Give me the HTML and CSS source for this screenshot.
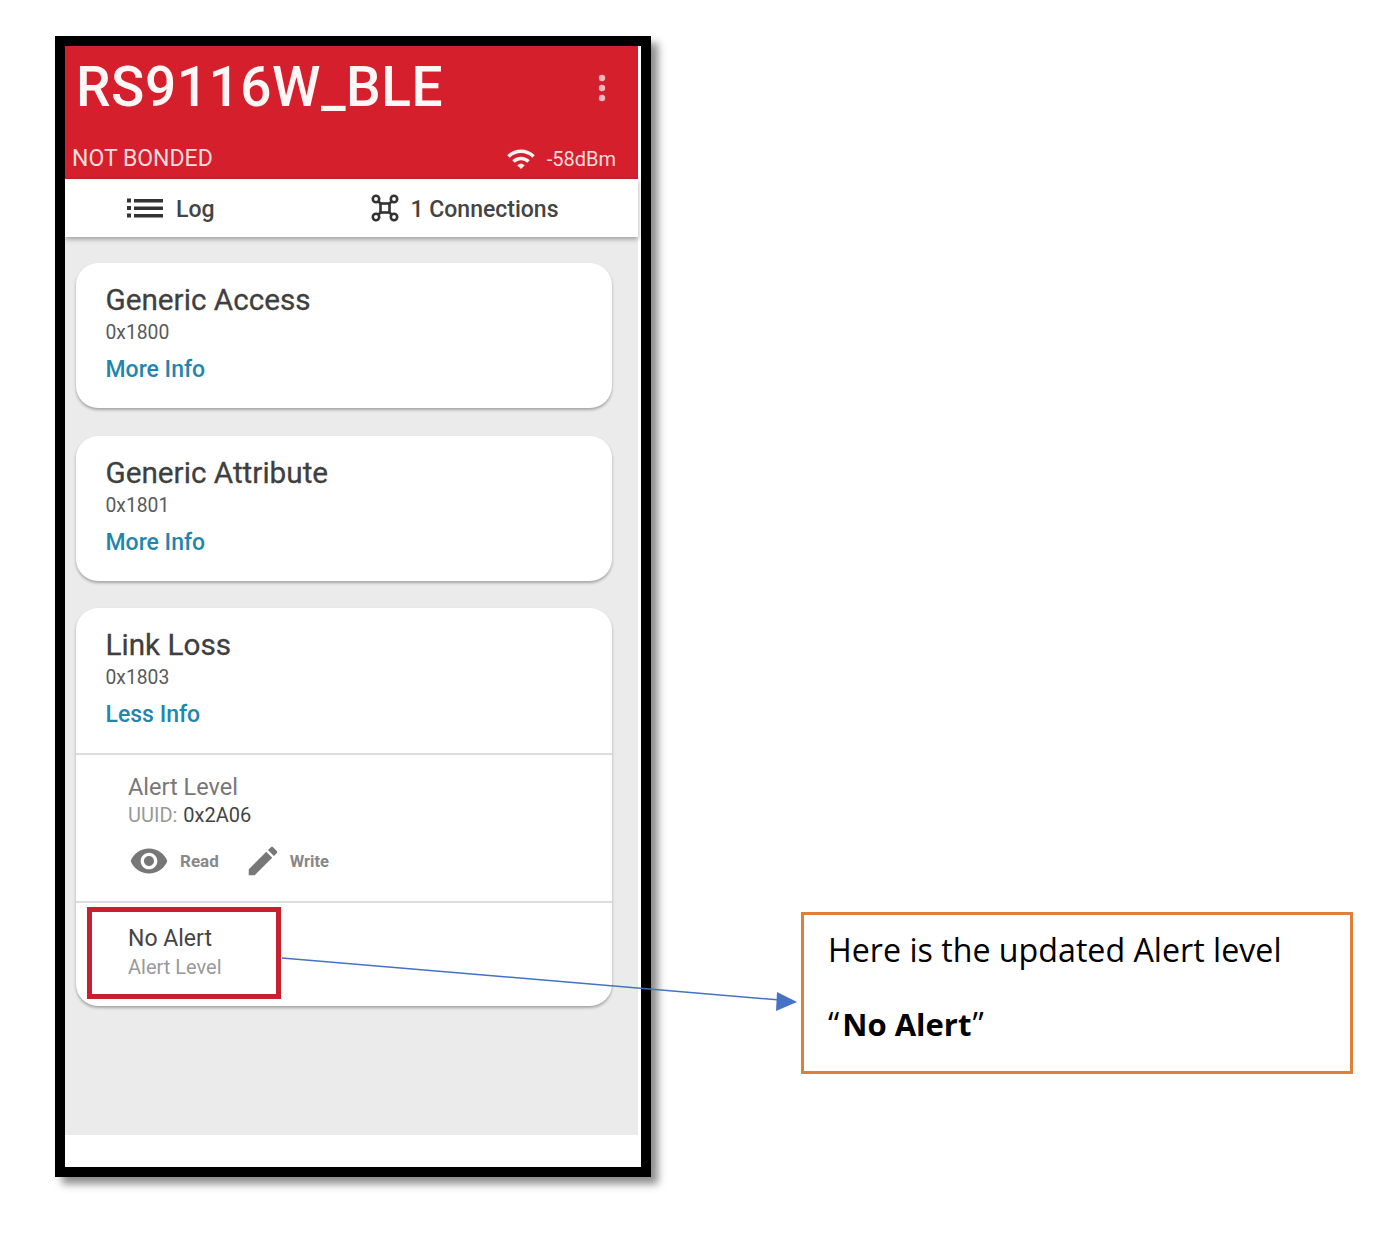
FILE: index.html
```html
<!DOCTYPE html>
<html lang="en">

<head>
    <meta charset="UTF-8">
    <meta name="viewport" content="width=device-width, initial-scale=1.0">
    <title>RS9116W_BLE Alert Level</title>
    <link rel="stylesheet" href="styles.css">
</head>

<body>
    <div class="page">
        <!-- phone screenshot -->
        <div class="phone">
            <header class="appbar">
                <div class="appbar-top">
                    <h1>RS9116W_BLE</h1>
                    <svg class="dots" width="8" height="28" viewBox="0 0 8 28">
                        <circle cx="4" cy="4" r="3.200"></circle>
                        <circle cx="4" cy="14" r="3.200"></circle>
                        <circle cx="4" cy="24" r="3.200"></circle>
                    </svg>
                </div>
                <div class="appbar-bottom">
                    <span>NOT BONDED</span>
                    <span class="rssi">
                        <svg width="30" height="30" viewBox="0 0 24 24">
                            <path d="M1 9l2 2c4.970-4.970 13.030-4.970 18 0l2-2C16.930 2.930 7.080 2.930 1 9zm8 8l3 3 3-3c-1.650-1.660-4.340-1.660-6 0zm-4-4l2 2c2.760-2.760 7.240-2.760 10 0l2-2C15.140 9.140 8.870 9.140 5 13z"></path>
                        </svg>
                        -58dBm
                    </span>
                </div>
            </header>

            <nav class="tabs">
                <div class="tab tab-log">
                    <svg width="37" height="22" viewBox="0 0 37 22">
                        <rect x="0" y="1.500" width="4" height="4"></rect>
                        <rect x="0" y="9" width="4" height="4"></rect>
                        <rect x="0" y="16.500" width="4" height="4"></rect>
                        <rect x="7" y="2" width="29" height="3.500"></rect>
                        <rect x="7" y="9.500" width="29" height="3.500"></rect>
                        <rect x="7" y="17" width="29" height="3.500"></rect>
                    </svg>
                    Log
                </div>
                <div class="tab tab-conn">
                    <svg width="28" height="28" viewBox="0 0 28 28" fill="none">
                        <circle cx="5" cy="5" r="3.200"></circle>
                        <circle cx="23" cy="5" r="3.200"></circle>
                        <circle cx="5" cy="23" r="3.200"></circle>
                        <circle cx="23" cy="23" r="3.200"></circle>
                        <rect x="9.500" y="9.500" width="9" height="9"></rect>
                        <path d="M7.500 7.500L9.500 9.500M20.500 7.500L18.500 9.500M7.500 20.500L9.500 18.500M20.500 20.500L18.500 18.500"></path>
                    </svg>
                    1 Connections
                </div>
            </nav>

            <main class="content">
                <section class="card">
                    <div class="card-head">
                        <h2>Generic Access</h2>
                        <p class="uuid">0x1800</p>
                        <a class="more">More Info</a>
                    </div>
                </section>

                <section class="card">
                    <div class="card-head">
                        <h2>Generic Attribute</h2>
                        <p class="uuid">0x1801</p>
                        <a class="more">More Info</a>
                    </div>
                </section>

                <section class="card">
                    <div class="card-head">
                        <h2>Link Loss</h2>
                        <p class="uuid">0x1803</p>
                        <a class="more">Less Info</a>
                    </div>
                    <div class="char">
                        <h3>Alert Level</h3>
                        <p class="char-uuid">UUID: <span>0x2A06</span></p>
                        <div class="actions">
                            <svg class="eye" width="40" height="40" viewBox="0 0 24 24">
                                <path d="M12 4.500C7 4.500 2.730 7.610 1 12c1.730 4.390 6 7.500 11 7.500s9.270-3.110 11-7.500c-1.730-4.390-6-7.500-11-7.500zM12 17c-2.760 0-5-2.240-5-5s2.240-5 5-5 5 2.240 5 5-2.240 5-5 5zm0-8c-1.660 0-3 1.340-3 3s1.340 3 3 3 3-1.340 3-3-1.340-3-3-3z"></path>
                            </svg>
                            <span class="action-read">Read</span>
                            <svg class="pencil" width="38" height="38" viewBox="0 0 24 24">
                                <path d="M3 17.250V21h3.750L17.810 9.940l-3.750-3.750L3 17.250zM20.710 7.040c.39-.39.39-1.020 0-1.410l-2.340-2.340c-.39-.39-1.020-.39-1.410 0l-1.830 1.830 3.750 3.750 1.830-1.830z"></path>
                            </svg>
                            <span class="action-write">Write</span>
                        </div>
                    </div>
                    <div class="value">
                        <div class="value-box">
                            <p class="value-main">No Alert</p>
                            <p class="value-sub">Alert Level</p>
                        </div>
                    </div>
                </section>
            </main>
        </div>

        <!-- note on the right -->
        <div class="note">
            <p>Here is the updated Alert level</p>
            <p>“<b>No Alert</b>”</p>
        </div>

        <!-- arrow from the value to the note -->
        <svg class="arrow" width="1393" height="1255" viewBox="0 0 1393 1255">
            <line x1="282" y1="958" x2="780" y2="1000"></line>
            <polygon points="797,1002 777,992 776,1011"></polygon>
        </svg>
    </div>
</body>

</html>
```

FILE: styles.css
```css
* {
    box-sizing: border-box;
}

body {
    margin: 0;
    background: #ffffff;
    font-family: Roboto, "Liberation Sans", sans-serif;
}

h1, h2, h3, p {
    margin: 0;
    font-weight: normal;
}

.page {
    position: relative;
    width: 1393px;
    height: 1255px;
    display: flex;
    align-items: flex-start;
    padding: 36px 0 0 55px;
}

/* phone */
.phone {
    width: 596px;
    height: 1141px;
    border: 10px solid #000000;
    background: #ffffff;
    box-shadow: 7px 7px 8px rgba(0, 0, 0, 0.45);
    display: flex;
    flex-direction: column;
}

.appbar {
    width: 573px;
    height: 133px;
    background: #d61f2c;
    color: #fdf3f3;
    display: flex;
    flex-direction: column;
    justify-content: space-between;
}

.appbar-top {
    display: flex;
    justify-content: space-between;
    align-items: center;
    padding: 11px 32px 0 11px;
}

.appbar-top h1 {
    font-size: 55px;
    letter-spacing: 0.5px;
    line-height: 60px;
    font-weight: 500;
    color: #fff6f6;
}

.dots {
    fill: #f0b8bc;
    margin-top: 2px;
}

.appbar-bottom {
    display: flex;
    justify-content: space-between;
    align-items: center;
    padding: 0 22px 5px 7px;
    font-size: 23px;
    line-height: 30px;
    color: #f9dcdd;
}

.rssi {
    display: flex;
    align-items: center;
    font-size: 20px;
}

.rssi svg {
    fill: #fdf3f3;
    margin-right: 11px;
}

.tabs {
    width: 573px;
    height: 58px;
    padding-top: 2px;
    background: #ffffff;
    display: flex;
    align-items: center;
    box-shadow: 0 2px 5px rgba(0, 0, 0, 0.35);
    position: relative;
    color: #444444;
    font-size: 23px;
    font-weight: 500;
}

.tab {
    display: flex;
    align-items: center;
}

.tab-log {
    margin-left: 62px;
    gap: 12px;
}

.tab-log svg {
    fill: #333333;
    margin-top: -3px;
}

.tab-conn {
    margin-left: 157px;
    gap: 12px;
}

.tab-conn svg {
    stroke: #333333;
    stroke-width: 2.600;
    margin-left: -1px;
    margin-top: -3px;
}

.content {
    width: 573px;
    height: 898px;
    background: #ebebeb;
    padding: 26px 26px 0 11px;
    display: flex;
    flex-direction: column;
    gap: 27.500px;
}

.card {
    background: #ffffff;
    border-radius: 22px;
    box-shadow: 0 2px 3px rgba(0, 0, 0, 0.3);
}

.card-head {
    height: 145px;
    padding: 21px 29.500px 0;
}

.card h2 {
    font-size: 29.700px;
    line-height: 32px;
    font-weight: 400;
    color: #3f3f3f;
    -webkit-text-stroke: 0.300px #3f3f3f;
}

.uuid {
    font-size: 19.300px;
    line-height: 24px;
    margin-top: 5px;
    color: #5a5a5a;
}

.more {
    display: block;
    font-size: 23px;
    line-height: 28px;
    margin-top: 11px;
    font-weight: 500;
    color: #1f86ad;
}

.char {
    height: 148px;
    border-top: 2px solid #dddddd;
    padding: 18px 52px 0;
}

.char h3 {
    font-size: 23.500px;
    line-height: 28px;
    color: #777777;
}

.char-uuid {
    font-size: 20px;
    line-height: 24px;
    margin-top: 2px;
    color: #999999;
}

.char-uuid span {
    color: #444444;
    margin-left: 1px;
}

.actions {
    display: flex;
    align-items: center;
    height: 40px;
    margin-top: 14px;
    font-size: 17px;
    font-weight: 700;
    color: #888888;
}

.actions svg {
    fill: #777777;
    flex: none;
}

.eye {
    margin-left: 1px;
    margin-right: 11px;
}

.action-read {
    margin-right: 25px;
}

.pencil {
    margin-right: 8px;
}

.action-write {
    font-size: 16.500px;
}

.value {
    height: 105px;
    border-top: 2px solid #dddddd;
    padding: 4px 0 0 11px;
}

.value-box {
    width: 194px;
    height: 92px;
    border: 5px solid #c8202f;
    padding: 13px 0 0 36px;
}

.value-main {
    font-size: 23px;
    line-height: 28px;
    color: #444444;
}

.value-sub {
    font-size: 20px;
    line-height: 24px;
    margin-top: 2px;
    color: #999999;
}

/* note */
.note {
    width: 552px;
    height: 162px;
    margin: 876px 0 0 150px;
    border: 3px solid #e07f3c;
    padding: 13px 0 0 24px;
    font-family: "Open Sans", "Noto Sans", sans-serif;
    font-size: 32.200px;
    line-height: 44px;
    color: #000000;
    background: #ffffff;
}

.note p + p {
    margin-top: 30px;
}

.note b {
    font-size: 31px;
    font-weight: 700;
    margin: 0 1px 0 3px;
}

.arrow {
    position: absolute;
    left: 0;
    top: 0;
    pointer-events: none;
}

.arrow line {
    stroke: #4472c4;
    stroke-width: 1.500;
}

.arrow polygon {
    fill: #4472c4;
}
```
